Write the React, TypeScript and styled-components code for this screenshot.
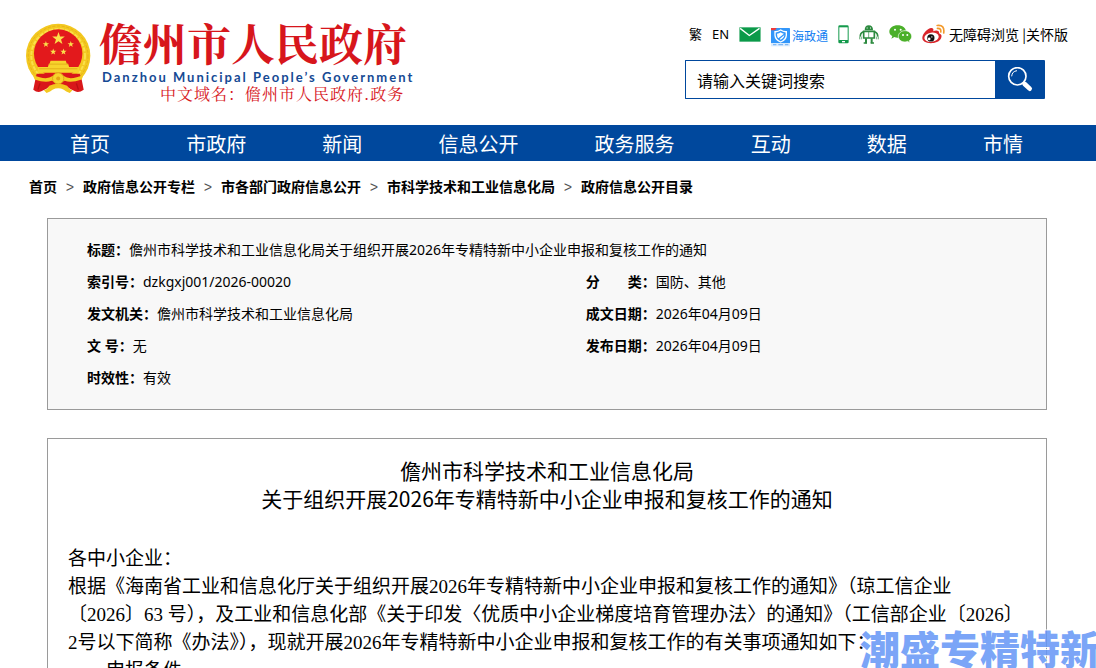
import React from "react";
import styled, { createGlobalStyle } from "styled-components";

const BLUE = "#00489d";
const CJK = '"Noto Sans CJK SC", sans-serif';

const GlobalStyle = createGlobalStyle`
  * { box-sizing: border-box; }
  body {
    margin: 0;
    background: #fff;
    color: #000;
    font: 14px/32px "Noto Sans", ${CJK};
  }
  a { color: inherit; text-decoration: none; }
  h1, p, dl, dd, ol { margin: 0; padding: 0; }
`;

const Page = styled.div`
  position: relative;
  height: 100vh;
  min-height: 480px;
  overflow: hidden;
`;

const Header = styled.header`
  display: flex;
  justify-content: space-between;
  align-items: flex-start;
  height: 125px;
  padding: 20px 28px 0 26px;
`;

const Brand = styled.a`
  display: flex;
  gap: 8px;
`;

const Emblem = styled.svg`
  width: 65px;
  height: 71px;
  margin-top: 3px;
`;

const BrandText = styled.div`
  display: flex;
  flex-direction: column;
  white-space: nowrap;
`;

const BrandName = styled.span`
  padding-bottom: 4px;
  font: 700 44px/44px "Noto Serif CJK SC", ${CJK};
  color: #d7161c;
`;

const BrandLatin = styled.span`
  padding-left: 3px;
  font: 700 13px/18px Lato, sans-serif;
  letter-spacing: 2px;
  color: #164a94;
`;

const BrandDomain = styled.span`
  padding-left: 61px;
  font: 16px/16px "Noto Serif CJK SC", ${CJK};
  letter-spacing: 1px;
  color: #d7161c;
`;

const Tools = styled.div`
  flex: 0 0 383px;
`;

const ToolRow = styled.div`
  display: flex;
  align-items: center;
  height: 28px;
  padding-left: 4px;
  gap: 10px;
  line-height: 20px;
  white-space: nowrap;
  svg { display: block; }
`;

const SmallLink = styled.a`
  font-size: 13px;
`;

const AppLink = styled.a`
  display: flex;
  align-items: center;
  gap: 2px;
  padding-top: 6px;
  font-size: 12px;
  color: #0f7df2;
`;

const AccessLink = styled.a`
  margin-left: -6px;
  font-family: ${CJK};
`;

const Search = styled.form`
  display: flex;
  width: 360px;
  height: 39px;
  margin-top: 12px;
`;

const SearchInput = styled.input`
  flex: 1;
  min-width: 0;
  padding: 0 11px;
  border: 1px solid ${BLUE};
  border-right: 0;
  border-radius: 1px 0 0 1px;
  font: 16px/24px ${CJK};
  outline: 0;
  &::placeholder { color: #000; opacity: 1; }
`;

const SearchButton = styled.button`
  display: flex;
  align-items: center;
  justify-content: center;
  width: 50px;
  padding: 0;
  border: 0;
  border-radius: 0 1px 1px 0;
  background: ${BLUE};
`;

const Nav = styled.nav`
  display: flex;
  justify-content: space-between;
  height: 36px;
  padding: 0 73px 0 70px;
  background: ${BLUE};
  color: #fff;
  font: 20px/38px ${CJK};
`;

const Crumbs = styled.ol`
  display: flex;
  list-style: none;
  height: 57px;
  padding: 9px 29px 0;
  font: bold 14px/32px ${CJK};
  white-space: nowrap;
  li + li::before {
    content: ">";
    display: inline-block;
    width: 26px;
    text-align: center;
    font: 14px/32px "Liberation Mono", monospace;
    color: #555;
  }
`;

const Main = styled.main`
  display: flex;
  flex-direction: column;
  gap: 28px;
  padding: 0 49px 0 47px;
`;

const InfoBox = styled.dl`
  display: grid;
  grid-template-columns: 13fr 12fr;
  padding: 15px 0 15px 39px;
  border: 1px solid #9a9a9a;
  background: #f8f8f8;
`;

const Field = styled.div<{ $wide?: boolean }>`
  display: flex;
  grid-column: ${(p) => (p.$wide ? "1 / -1" : "auto")};
  height: 32px;
  white-space: pre;
  dt { font-weight: bold; }
`;

const Article = styled.article`
  padding: 17px 20px 40px;
  border: 1px solid #9a9a9a;
  font: 19px/28px "Liberation Serif", ${CJK};
`;

const Title = styled.h1`
  margin-bottom: 33px;
  font: 21px/28px ${CJK};
  text-align: center;
`;

const Watermark = styled.div`
  position: absolute;
  right: -4px;
  bottom: 0;
  font: 900 40px/40px ${CJK};
  color: #6496f6;
  opacity: 0.85;
  white-space: nowrap;
  text-shadow: 1px 0 #fff, -1px 0 #fff, 0 1px #fff, 0 -1px #fff;
`;

const star = (cx: number, cy: number, r: number) =>
  Array.from({ length: 10 }, (_, i) => {
    const a = (Math.PI / 5) * i - Math.PI / 2;
    const q = i % 2 ? r * 0.4 : r;
    return `${(cx + q * Math.cos(a)).toFixed(1)},${(cy + q * Math.sin(a)).toFixed(1)}`;
  }).join(" ");

const NationalEmblem = () => (
  <Emblem viewBox="30 38 196 212" aria-hidden="true">
    <circle cx="127" cy="136" r="97" fill="#f3c81f" />
    <circle cx="127" cy="136" r="90" fill="none" stroke="#dfa818" strokeWidth="2" strokeDasharray="9 5" />
    <circle cx="127" cy="136" r="81" fill="none" stroke="#fbe04a" strokeWidth="6" strokeDasharray="12 4" />
    <circle cx="127" cy="129" r="73" fill="#e3191c" />
    {[[128, 84, 20], [90, 101, 10], [165, 101, 10], [112, 124, 10], [143, 124, 10]].map(([x, y, r]) => (
      <polygon key={x} points={star(x, y, r)} fill="#fbe04a" />
    ))}
    <path d="M104 151 H150 L153 160 H157 L160 170 H190 V187 H66 V170 H96 L99 160 H101Z" fill="#f7d32c" />
    <path d="M99 161 H157 M70 175 H185" stroke="#d99e12" strokeWidth="2" />
    <path d="M62 190 H192 L198 208 L204 238 Q190 248 178 243 Q166 240 152 228 H102 Q88 240 76 243 Q64 248 52 238 L58 208Z" fill="#d9171a" />
    <path d="M50 192 Q90 212 110 197 L127 187 L144 197 Q164 212 204 192 L198 207 Q165 219 147 211 L127 218 L107 211 Q89 219 56 207Z" fill="#f5cb22" />
    <circle cx="127" cy="204" r="17" fill="#f7d32c" stroke="#e0a518" strokeWidth="3" />
    <circle cx="127" cy="204" r="6" fill="#e3a514" />
    <path d="M72 219 L66 238 M182 219 L188 238" stroke="#b90f13" strokeWidth="4" />
    <path d="M84 240 Q96 236 100 226 Q127 214 154 226 Q158 236 170 240 L162 248 Q150 244 144 238 Q127 230 110 238 Q104 244 92 248Z" fill="#f3c81f" />
  </Emblem>
);

const MailIcon = () => (
  <svg width="22" height="15" viewBox="0 0 64 44" aria-hidden="true">
    <path d="M1 1 H63 V43 H1Z" fill="#0b9a49" />
    <path d="M3 4 L30 25 L60 4" fill="none" stroke="#fff" strokeWidth="4" />
  </svg>
);

const ShieldIcon = () => (
  <svg width="19" height="19" viewBox="0 0 57 57" aria-hidden="true">
    <rect width="57" height="46" rx="2" fill="#3296fa" />
    <rect y="46" width="57" height="9" fill="#dcecfd" />
    <path d="M6 50 H16 M22 50 H36 M42 50 H52" stroke="#7db7f5" strokeWidth="4" />
    <path d="M0 0 H17 L12 7 H0Z" fill="#ee3a3a" />
    <path d="M29 6 Q38 12 46 11 V22 Q45 35 29 42 Q13 35 12 22 V11 Q20 12 29 6Z" fill="none" stroke="#fff" strokeWidth="4" />
    <path d="M29 13 Q34 17 39 17 L22 31 Q18 27 18 17 Q24 17 29 13Z M40 21 Q39 31 29 35 L26 33Z" fill="#fff" />
  </svg>
);

const PhoneIcon = () => (
  <svg width="11" height="19" viewBox="0 0 33 57" aria-hidden="true">
    <rect x="1" y="1" width="31" height="54" rx="4" fill="#149a4c" />
    <rect x="4" y="7" width="25" height="38" fill="#fff" />
    <path d="M12 50 H21" stroke="#fff" strokeWidth="4" />
  </svg>
);

const RobotIcon = () => (
  <svg width="20" height="19" viewBox="0 0 60 57" fill="none" stroke="#2c8a3f" aria-hidden="true">
    <path d="M17 16 Q17 1 29 1 Q42 1 42 16Z" fill="#2c8a3f" stroke="none" />
    <path d="M23 9 h3 M33 9 h3" stroke="#fff" strokeWidth="3" />
    <path d="M14 19 H46 V39 H14Z" strokeWidth="5" />
    <path d="M29 20 V39" strokeWidth="2" />
    <path d="M13 20 Q3 24 4 35 M47 20 Q57 24 56 35" strokeWidth="5" />
    <path d="M2 35 V43 M7 35 V43 M53 35 V43 M58 35 V43" strokeWidth="2" />
    <path d="M21 40 V55 M38 40 V55" strokeWidth="6" />
    <path d="M14 54 H24 M35 54 H45" strokeWidth="4" />
  </svg>
);

const WechatIcon = () => (
  <svg width="23" height="18" viewBox="53 31 69 54" aria-hidden="true">
    <path d="M79 32 C93 32 104 40 104 51 C104 62 93 69 79 69 Q73 69 69 67 L60 72 L63 64 C57 61 54 56 54 51 C54 40 65 32 79 32Z" fill="#4bb02a" />
    <path d="M101 48 C112 48 121 56 121 65 C121 71 118 75 114 78 L116 84 L108 80 Q105 82 101 82 C90 82 81 75 81 65 C81 56 90 48 101 48Z" fill="#4bb02a" stroke="#fff" strokeWidth="2" />
    <g fill="#fff">
      <circle cx="71" cy="45" r="3" /><circle cx="88" cy="45" r="3" />
      <circle cx="95" cy="61" r="3" /><circle cx="108" cy="61" r="3" />
    </g>
  </svg>
);

const WeiboIcon = () => (
  <svg width="23" height="20" viewBox="149 29 70 60" aria-hidden="true">
    <path d="M150 70 C151 57 167 41 177 41 C184 41 185 46 183 51 C190 47 203 47 201 57 C209 60 210 66 207 72 C202 83 188 87 176 87 C161 87 149 81 150 70Z" fill="#d9252a" />
    <ellipse cx="178" cy="69" rx="22" ry="14" fill="#fff" transform="rotate(-8 178 69)" />
    <circle cx="176" cy="71" r="11" fill="#111" />
    <circle cx="171" cy="74" r="4" fill="#fff" />
    <circle cx="179" cy="68" r="2" fill="#fff" />
    <path d="M195 33 Q219 30 215 56 M196 42 Q208 41 206 53" fill="none" stroke="#f39a2b" strokeWidth="5" strokeLinecap="round" />
  </svg>
);

const SearchIcon = () => (
  <svg width="26" height="26" viewBox="408 156 78 78" fill="none" stroke="#fff" aria-hidden="true">
    <circle cx="439" cy="184" r="26" strokeWidth="5" />
    <path d="M422 184 Q423 169 438 167" strokeWidth="3" />
    <path d="M457 204 L464 209" strokeWidth="6" />
    <path d="M461 207 L476 221" strokeWidth="14" strokeLinecap="round" />
  </svg>
);

const navItems = ["首页", "市政府", "新闻", "信息公开", "政务服务", "互动", "数据", "市情"];
const crumbs = ["首页", "政府信息公开专栏", "市各部门政府信息公开", "市科学技术和工业信息化局", "政府信息公开目录"];
const fields: { label: string; value: string; wide?: boolean }[] = [
  { label: "标题：", value: "儋州市科学技术和工业信息化局关于组织开展2026年专精特新中小企业申报和复核工作的通知", wide: true },
  { label: "索引号：", value: "dzkgxj001/2026-00020" },
  { label: "分　　类：", value: "国防、其他" },
  { label: "发文机关：", value: "儋州市科学技术和工业信息化局" },
  { label: "成文日期：", value: "2026年04月09日" },
  { label: "文 号：", value: "无" },
  { label: "发布日期：", value: "2026年04月09日" },
  { label: "时效性：", value: "有效", wide: true },
];

export default function App() {
  return (
    <Page>
      <GlobalStyle />
      <Header>
        <Brand href="#">
          <NationalEmblem />
          <BrandText>
            <BrandName>儋州市人民政府</BrandName>
            <BrandLatin>Danzhou Municipal People’s Government</BrandLatin>
            <BrandDomain>中文域名：儋州市人民政府.政务</BrandDomain>
          </BrandText>
        </Brand>
        <Tools>
          <ToolRow>
            <SmallLink href="#">繁</SmallLink>
            <SmallLink href="#">EN</SmallLink>
            <a href="#" aria-label="邮箱"><MailIcon /></a>
            <AppLink href="#"><ShieldIcon />海政通</AppLink>
            <a href="#" aria-label="手机版"><PhoneIcon /></a>
            <a href="#" aria-label="智能机器人"><RobotIcon /></a>
            <a href="#" aria-label="微信"><WechatIcon /></a>
            <a href="#" aria-label="微博"><WeiboIcon /></a>
            <AccessLink href="#">无障碍浏览 |关怀版</AccessLink>
          </ToolRow>
          <Search onSubmit={(e) => e.preventDefault()}>
            <SearchInput type="text" aria-label="搜索" placeholder="请输入关键词搜索" />
            <SearchButton type="submit" aria-label="搜索"><SearchIcon /></SearchButton>
          </Search>
        </Tools>
      </Header>
      <Nav>
        {navItems.map((n) => <a key={n} href="#">{n}</a>)}
      </Nav>
      <Crumbs>
        {crumbs.map((c) => <li key={c}><a href="#">{c}</a></li>)}
      </Crumbs>
      <Main>
        <InfoBox>
          {fields.map((f) => (
            <Field key={f.label} $wide={f.wide}>
              <dt>{f.label}</dt>
              <dd>{f.value}</dd>
            </Field>
          ))}
        </InfoBox>
        <Article>
          <Title>
            儋州市科学技术和工业信息化局<br />
            关于组织开展2026年专精特新中小企业申报和复核工作的通知
          </Title>
          <p>各中小企业：</p>
          <p>
            根据《海南省工业和信息化厅关于组织开展2026年专精特新中小企业申报和复核工作的通知》（琼工信企业<br />
            〔2026〕63 号），及工业和信息化部《关于印发〈优质中小企业梯度培育管理办法〉的通知》（工信部企业〔2026〕<br />
            2号以下简称《办法》），现就开展2026年专精特新中小企业申报和复核工作的有关事项通知如下：
          </p>
          <p>一、申报条件</p>
        </Article>
      </Main>
      <Watermark>潮盛专精特新</Watermark>
    </Page>
  );
}
